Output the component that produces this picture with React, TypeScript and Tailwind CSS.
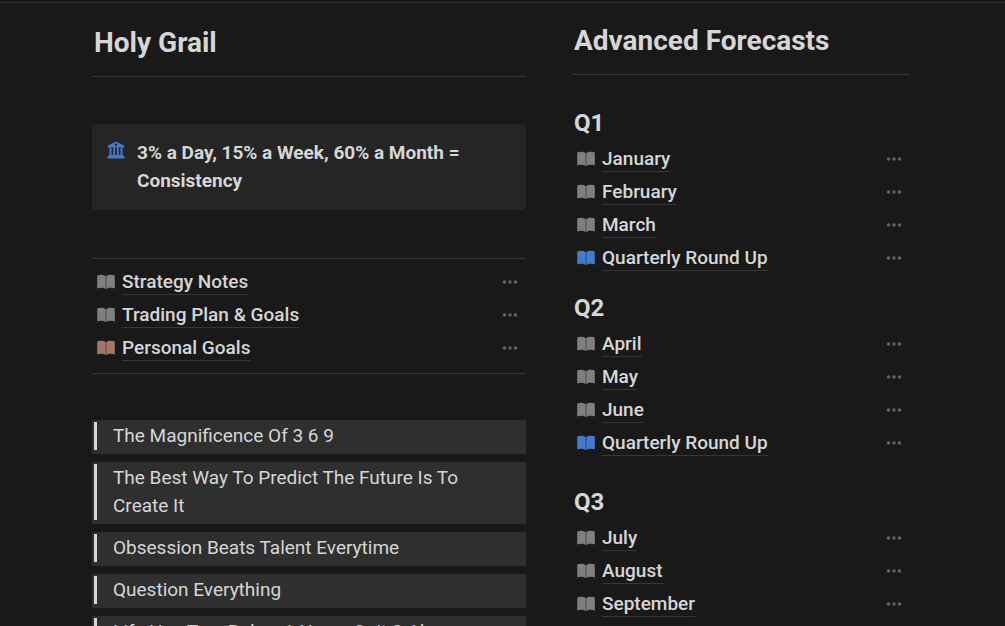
import clsx from 'clsx';

interface PageItem {
  name: string;
  tone?: 'gray' | 'brown' | 'blue';
}

interface Quarter {
  title: string;
  pages: PageItem[];
}

const toneClasses = {
  gray: 'text-[#7f7f7f]',
  brown: 'text-[#a27763]',
  blue: 'text-[#447acb]',
};

const notes: PageItem[] = [
  { name: 'Strategy Notes' },
  { name: 'Trading Plan & Goals' },
  { name: 'Personal Goals', tone: 'brown' },
];

const quotes = [
  'The Magnificence Of 3 6 9',
  'The Best Way To Predict The Future Is To Create It',
  'Obsession Beats Talent Everytime',
  'Question Everything',
  'Life Has Two Rules: 1 Never Quit 2 Always Remember Rule 1',
];

const firstHalf: Quarter[] = [
  {
    title: 'Q1',
    pages: [{ name: 'January' }, { name: 'February' }, { name: 'March' }, { name: 'Quarterly Round Up', tone: 'blue' }],
  },
  {
    title: 'Q2',
    pages: [{ name: 'April' }, { name: 'May' }, { name: 'June' }, { name: 'Quarterly Round Up', tone: 'blue' }],
  },
];

const secondHalf: Quarter[] = [
  {
    title: 'Q3',
    pages: [{ name: 'July' }, { name: 'August' }, { name: 'September' }],
  },
];

const BookIcon = ({ className }: { className: string }) => (
  <svg viewBox="0 0 18 16" className={clsx('h-4 w-[18px] shrink-0', className)} fill="currentColor" aria-hidden="true">
    <path d="M8.75 2C7.200 1 5.600.7 4.200.7 2.700.7 1.300.9.2 1.400v13.100C1.500 14 2.900 13.800 4.200 13.800c1.500 0 3.100.3 4.550 1.300z" />
    <path d="M9.25 2C10.800 1 12.400.7 13.800.7c1.500 0 2.900.2 4 .7v13.100c-1.200-.5-2.600-.7-4-.7-1.500 0-3.100.3-4.550 1.300z" />
  </svg>
);

const BankIcon = () => (
  <svg viewBox="0 0 18 18" className="mt-[2px] h-[18px] w-[18px] shrink-0 text-[#447acb]" fill="currentColor" aria-hidden="true">
    <path
      fillRule="evenodd"
      d="M9 .5 17.300 4.800v1.700H.7V4.800zM9 2.600a1.200 1.200 0 1 0 0 2.400 1.200 1.200 0 0 0 0-2.400z"
    />
    <path d="M2.500 6.500h2v8h-2zM6.200 6.500h1.900v8H6.200zM9.900 6.500h1.900v8H9.900zM13.500 6.500h2v8h-2z" />
    <path d="M1.500 14h15v1.500h-15zM.5 15.500h17v2H.5z" />
  </svg>
);

const DotsIcon = () => (
  <svg viewBox="0 0 16 4" className="h-1 w-4" fill="currentColor" aria-hidden="true">
    <circle cx="2.500" cy="2" r="1.800" />
    <circle cx="8" cy="2" r="1.800" />
    <circle cx="13.500" cy="2" r="1.800" />
  </svg>
);

const PageRow = ({ page }: { page: PageItem }) => (
  <li className="flex h-[33px] items-center pr-2 pl-[5px]">
    <BookIcon className={clsx('mb-[2px]', toneClasses[page.tone ?? 'gray'])} />
    <a href="#" className="ml-[7px] border-b border-[#373737] leading-6 font-medium">
      {page.name}
    </a>
    <button type="button" aria-label={`More options for ${page.name}`} className="ml-auto pt-2 pb-[10px] text-[#626262]">
      <DotsIcon />
    </button>
  </li>
);

const PageList = ({ pages }: { pages: PageItem[] }) => (
  <ul>
    {pages.map((page) => (
      <PageRow key={page.name} page={page} />
    ))}
  </ul>
);

const QuarterGroup = ({ quarters }: { quarters: Quarter[] }) => (
  <div className="flex flex-col gap-[17px]">
    {quarters.map((quarter) => (
      <div key={quarter.title}>
        <h2 className="pb-1 pl-[2px] text-2xl leading-8 font-bold">{quarter.title}</h2>
        <PageList pages={quarter.pages} />
      </div>
    ))}
  </div>
);

const Callout = () => (
  <div className="mt-[47px] flex gap-3 rounded bg-[#252525] p-[15px]">
    <BankIcon />
    <p className="leading-7 font-bold">3% a Day, 15% a Week, 60% a Month = Consistency</p>
  </div>
);

const Quote = ({ text }: { text: string }) => (
  <blockquote className="bg-[#2f2f2f] pt-[2px] pb-1 pl-[2px]">
    <p className="border-l-3 border-[#d6d6d6] px-4 leading-7">{text}</p>
  </blockquote>
);

export default function App() {
  return (
    <div className="h-screen overflow-hidden bg-[#191919] pt-[2px] font-[Roboto,sans-serif] text-[19px] text-[#d6d6d6]">
      <main className="grid grid-cols-[434fr_338fr] gap-x-[46px] border-t border-[#2d2d2d] pr-[95px] pl-[92px]">
        <section>
          <h1 className="border-b border-[#373737] pt-[22px] pb-[15px] pl-[2px] text-[28px] leading-9 font-bold">
            Holy Grail
          </h1>
          <Callout />
          <div className="mt-12 border-y border-[#373737] pt-[7px] pb-2">
            <PageList pages={notes} />
          </div>
          <div className="mt-[46px] flex flex-col gap-2">
            {quotes.map((text) => (
              <Quote key={text} text={text} />
            ))}
          </div>
        </section>

        <section>
          <h1 className="border-b border-[#373737] pt-5 pb-[15px] pl-[2px] text-[28px] leading-9 font-bold">
            Advanced Forecasts
          </h1>
          <div className="flex flex-col gap-[26px] pt-8">
            <QuarterGroup quarters={firstHalf} />
            <QuarterGroup quarters={secondHalf} />
          </div>
        </section>
      </main>
    </div>
  );
}
